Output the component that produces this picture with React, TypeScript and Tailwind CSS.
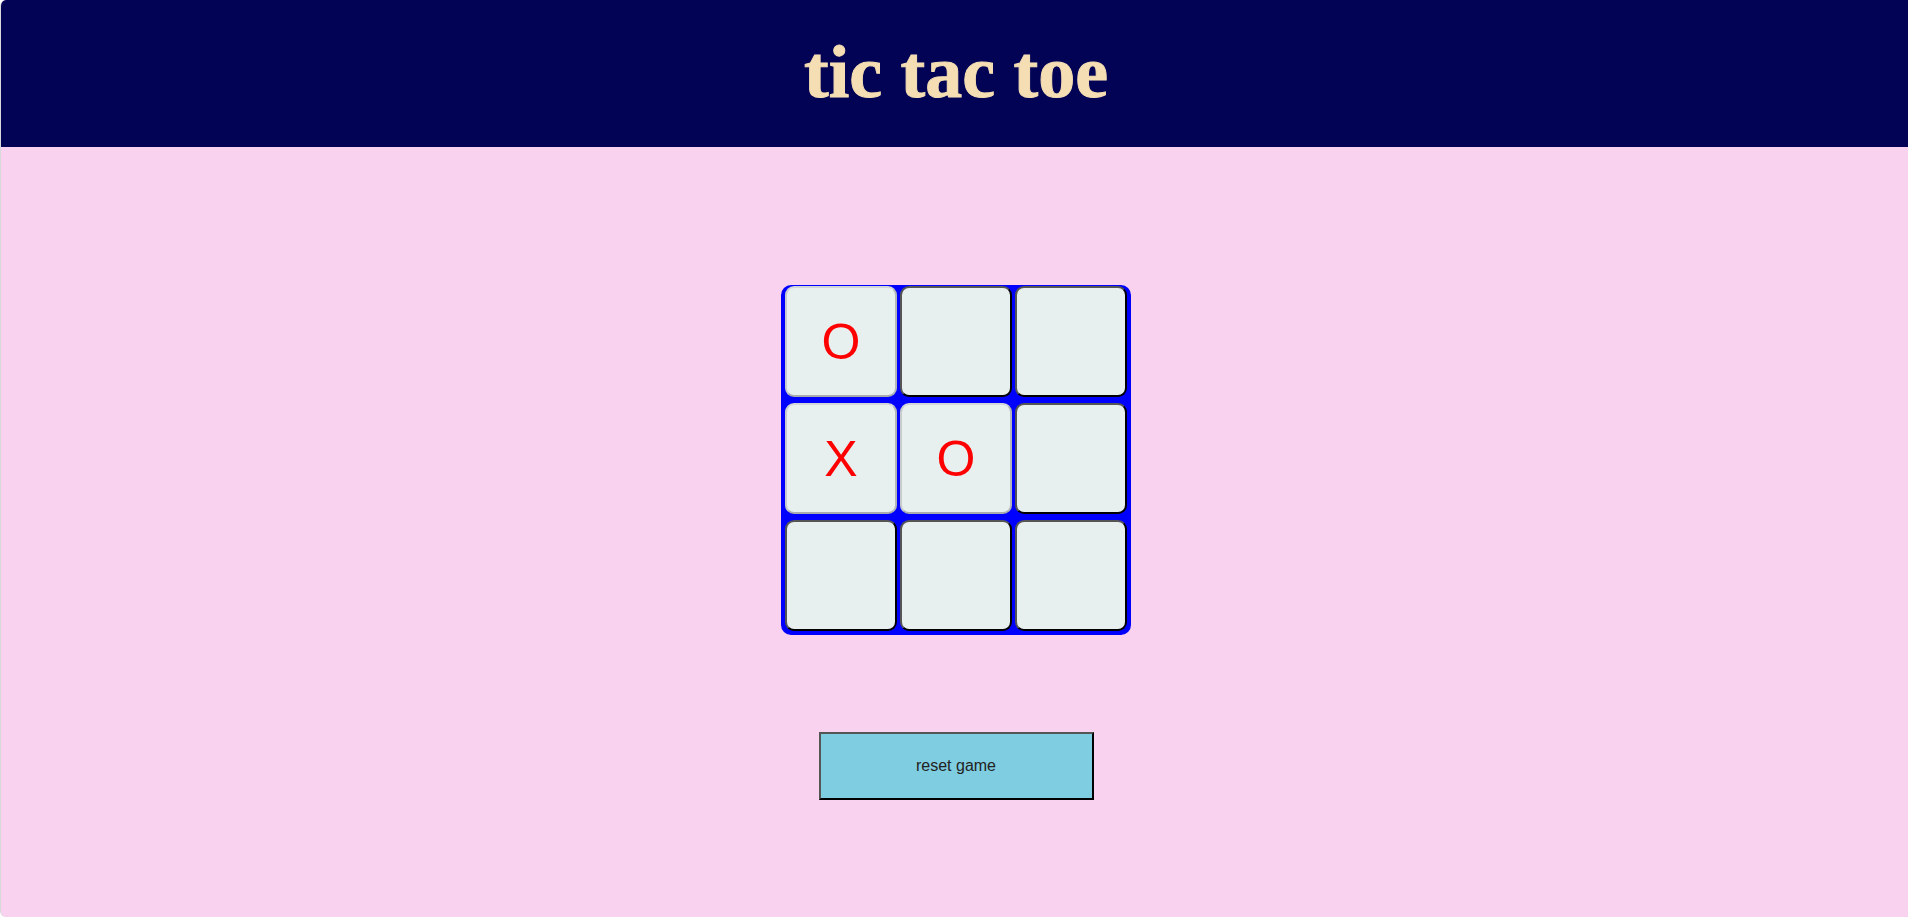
import { useState } from 'react';

type Mark = 'X' | 'O' | '';

const START: Mark[] = ['O', '', '', 'X', 'O', '', '', '', ''];

function Cell({ value, onClick }: { value: Mark; onClick: () => void }) {
  const filled = value !== '';
  return (
    <button
      onClick={onClick}
      disabled={filled}
      className={`flex h-[111px] w-[112px] items-center justify-center rounded-[9px] border-2 bg-[#e8efef] text-[50px] leading-none text-[#ff0000] font-['Liberation_Sans',Arial,sans-serif] ${
        filled
          ? 'border-t-[#d2d6d8] border-l-[#c8cccf] border-b-[#a9acae] border-r-[#b3b6b8]'
          : 'border-t-[#555] border-l-[#555] border-b-black border-r-black'
      }`}
    >
      {value}
    </button>
  );
}

export default function App() {
  const [board, setBoard] = useState<Mark[]>(START);
  const [turn, setTurn] = useState<Mark>('X');

  const play = (i: number) => {
    if (board[i]) return;
    const next = [...board];
    next[i] = turn;
    setBoard(next);
    setTurn(turn === 'X' ? 'O' : 'X');
  };

  return (
    <div className="min-h-[917px] bg-white">
      <div className="flex min-h-[917px] flex-col overflow-hidden rounded-l-[6px] border-l border-[#d9d9d9] bg-[#f9d2f0]">
        <header className="flex h-[147px] items-center justify-center bg-[#030356] pl-[3px]">
          <h1 className="mt-[-3px] text-[74px] font-bold leading-none text-[#f5deb3] [-webkit-text-stroke:1px_#f5deb3] font-['Liberation_Serif','Times_New_Roman',serif]">
            tic tac toe
          </h1>
        </header>

        <main className="flex flex-col items-center pt-[138px] pl-[3px]">
          <div className="grid h-[350px] w-[350px] grid-cols-[112px_112px_112px] gap-x-[3px] gap-y-[6px] rounded-[10px] bg-[#0000ff] px-[4px] pt-[1px] pb-[4px]">
            {board.map((v, i) => (
              <Cell key={i} value={v} onClick={() => play(i)} />
            ))}
          </div>

          <button
            onClick={() => {
              setBoard(Array(9).fill('') as Mark[]);
              setTurn('X');
            }}
            className="mt-[97px] h-[68px] w-[275px] border-2 border-t-[#555] border-l-[#555] border-b-black border-r-black bg-[#7fcde0] text-[16px] text-[#222] font-['Liberation_Sans',Arial,sans-serif]"
          >
            reset game
          </button>
        </main>
      </div>
    </div>
  );
}
